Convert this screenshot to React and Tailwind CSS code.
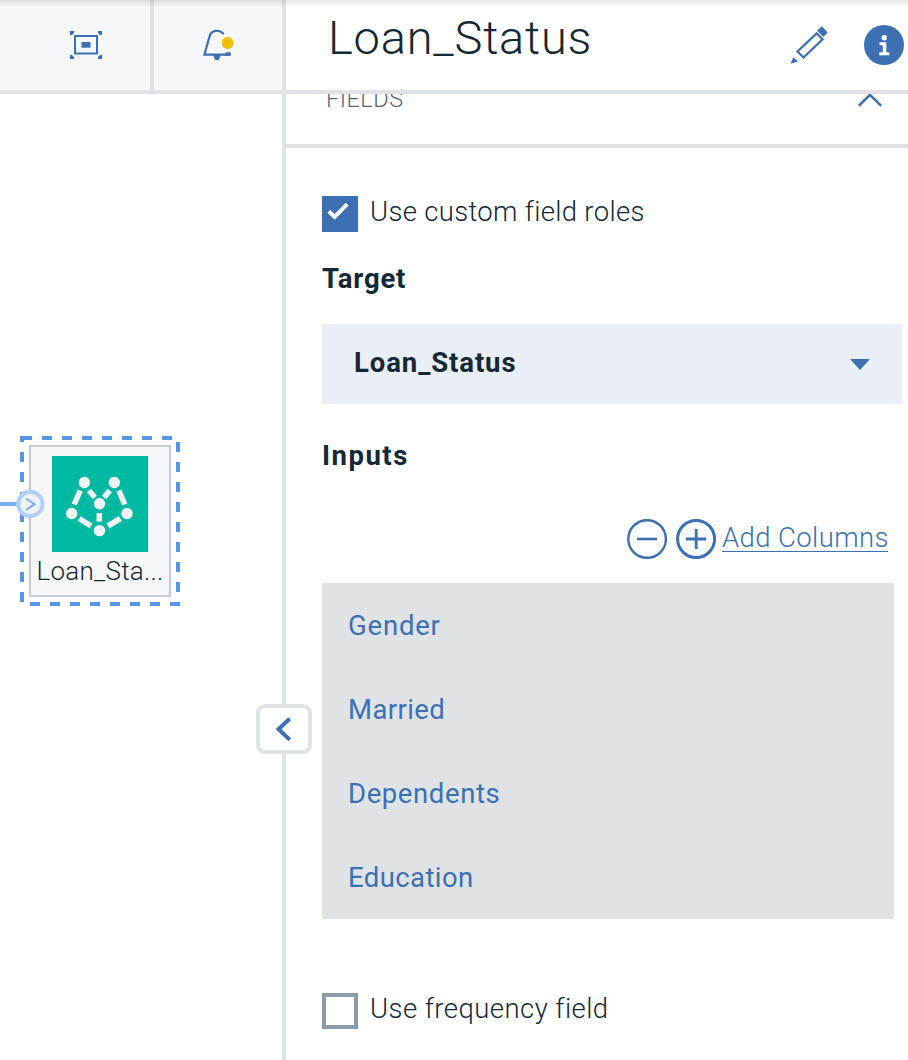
const blue = '#3d70b2';

function Toolbar() {
  return (
    <div className="flex h-[94px] shrink-0 border-b-4 border-[#dfe3e6] bg-[#f5f7fb]">
      <button className="flex w-[154px] items-center border-r-4 border-[#dfe3e6] pl-[70px]" aria-label="Fit">
        <svg width="32" height="28" viewBox="0 0 32 28" fill={blue}>
          <path d="M0 0h4v2L2 4H0zM28 0h4v4h-2l-2-2zM0 24h2l2 2v2H0zM30 24h2v4h-4v-2z" />
          <rect x="5" y="5" width="22" height="17.5" fill="none" stroke={blue} strokeWidth="2" />
          <rect x="11.5" y="11" width="9" height="5.7" />
        </svg>
      </button>
      <button className="flex flex-1 items-center pl-[48px]" aria-label="Notifications">
        <svg width="34" height="34" viewBox="0 0 34 34" fill="none">
          <path d="M21.700 6C17.500 1.200 9.200 1.500 7.500 8.500L2.400 26.600H28.500" stroke={blue} strokeWidth="2.200" />
          <path d="M23 25.600L24.500 24.300H28.600V27.700H23Z" fill={blue} />
          <path d="M11.600 27h6.800a3.400 5.200 0 0 1-6.800 0z" fill={blue} />
          <circle cx="25.600" cy="15" r="6" fill="#efc100" />
        </svg>
      </button>
    </div>
  );
}

function ModelNode() {
  return (
    <div className="absolute top-[436px] left-0 h-[170px] w-[182px]">
      <div className="absolute top-[9px] left-[29px] flex h-[152px] w-[142px] flex-col items-center border-2 border-[#c3cdd3] bg-[#f5f7fb] pt-[9px]">
        <svg className="shrink-0" width="96" height="96" viewBox="52 456 96 96">
          <rect x="52" y="456" width="96" height="96" fill="#00b9a2" />
          <g stroke="#f2f3f3" strokeWidth="5.600">
            <path d="M80.200 490.500L74.200 504.500M118.800 490.500L124.800 504.500M89 490.500L94.800 497.500M109.800 490.500L104 497.500M99.300 513V521.500M79.300 518.500L91 526M120.300 518.500L108 526" />
          </g>
          <g fill="#f2f3f3">
            <circle cx="84.400" cy="482.500" r="5.700" />
            <circle cx="114.300" cy="482.500" r="5.700" />
            <circle cx="99.500" cy="503.700" r="5.700" />
            <circle cx="71.700" cy="513.500" r="5.700" />
            <circle cx="127" cy="513.500" r="5.700" />
            <circle cx="99.500" cy="530.600" r="5.700" />
          </g>
        </svg>
        <div className="mt-[1px] text-[26px] leading-[36px] font-light tracking-[0.250px] whitespace-nowrap">Loan_Sta...</div>
      </div>
      <svg className="absolute top-0 left-0" width="182" height="170" viewBox="0 436 182 170" fill="none">
        <path d="M22 438H178V604H22Z" stroke="#5596e6" strokeWidth="4" strokeDasharray="10 10" />
        <path d="M0 504H18" stroke="#7cabea" strokeWidth="4" />
        <circle cx="30.300" cy="504" r="12.200" fill="#eaf2fc" stroke="#b0cff3" strokeWidth="4" />
        <path d="M26 498.500L34.500 504.200L26 510" stroke="#7cabea" strokeWidth="2" />
      </svg>
    </div>
  );
}

function Checkbox({ checked, children }) {
  return (
    <label className="flex h-10 items-start gap-[12px]">
      {checked ? (
        <span className="mt-[4px] h-9 w-9 bg-[#3d70b2]">
          <svg width="36" height="36" viewBox="0 0 36 36" fill="none">
            <path d="M6.800 15.300L12.600 21L25.200 8.200" stroke="#fff" strokeWidth="4" />
          </svg>
        </span>
      ) : (
        <span className="mt-[4px] h-9 w-9 border-4 border-[#8c9ba5]" />
      )}
      {children}
    </label>
  );
}

function PanelHeader() {
  return (
    <div className="flex h-[94px] shrink-0 items-start border-b-4 border-[#dfe3e6]">
      <h1 className="mt-[10px] ml-[42px] w-[455px] text-[47px] leading-[56px] font-light tracking-[0.8px]">Loan_Status</h1>
      <button className="mt-[25px] ml-[7px]" aria-label="Rename">
        <svg width="40" height="40" viewBox="0 0 40 40" fill="none">
          <path d="M7.500 26.500L26.600 8.300L32.600 14.300L13.600 32.500Z" stroke={blue} strokeWidth="2.300" />
          <path d="M31.900 1.200L37.800 7.500L33.400 12L27 5.500Z" fill={blue} />
          <path d="M3.200 32.300L8.200 36.600L.6 38.700Z" fill={blue} />
        </svg>
      </button>
      <button className="mt-[25px] ml-[34px]" aria-label="Information">
        <svg width="40" height="40" viewBox="0 0 40 40">
          <circle cx="20" cy="20" r="20" fill={blue} />
          <g fill="#fff">
            <circle cx="20.300" cy="12.700" r="2.700" />
            <path d="M15.500 17.300H22.300V27.200H25.300V30.200H15.300V27.200H18.800V20.200H15.500Z" />
          </g>
        </svg>
      </button>
    </div>
  );
}

const inputs = [
  ['Gender', 'tracking-[0.8px]'],
  ['Married', 'tracking-[0.4px]'],
  ['Dependents', 'tracking-[0.6px]'],
  ['Education', 'tracking-[0.4px]'],
];

export default function App() {
  return (
    <div className="relative flex h-[1060px] w-[908px] overflow-hidden bg-white font-['Roboto',sans-serif] text-[27.5px] leading-[40px] text-[#152935]">
      <div className="relative flex w-[282px] shrink-0 flex-col">
        <Toolbar />
        <ModelNode />
      </div>
      <div className="flex w-[626px] shrink-0 flex-col border-l-4 border-[#dfe3e6]">
        <PanelHeader />
        <div className="flex h-[54px] shrink-0 items-start overflow-hidden border-b-4 border-[#dfe3e6] pl-[40px]">
          <div className="-mt-[15px] w-[532px] text-[23.500px] font-light tracking-[0.5px] text-[#5a6872]">FIELDS</div>
          <svg width="26" height="16" viewBox="0 0 26 16" fill="none">
            <path d="M.8 11.800L12 .8L23.200 11.800" stroke={blue} strokeWidth="2.500" />
          </svg>
        </div>
        <div className="flex flex-col pl-[36px]">
          <div className="mt-[44px]">
            <Checkbox checked>
              <span className="font-light tracking-[0.320px]">Use custom field roles</span>
            </Checkbox>
          </div>
          <div className="mt-[27px] font-bold tracking-[0.8px]"><span>Target</span></div>
          <div className="mt-[25px] flex h-20 w-[580px] items-center justify-between bg-[#eaeef6] pr-[32px] pl-[32px]">
            <span className="-mt-[3px] font-bold tracking-[0.9px]">Loan_Status</span>
            <svg width="20" height="12" viewBox="0 0 20 12"><path d="M0 1H20L10 12Z" fill={blue} /></svg>
          </div>
          <div className="mt-[32px] font-bold tracking-[1.500px]"><span>Inputs</span></div>
          <div className="mt-[43px] flex h-10 items-start pl-[305px] text-[#3d70b2]">
            <svg width="40" height="40" viewBox="0 0 40 40" fill="none" stroke={blue}>
              <circle cx="20.100" cy="20" r="18.800" strokeWidth="2.400" />
              <path d="M10 20H30" strokeWidth="2.600" />
            </svg>
            <svg className="ml-[9px]" width="40" height="40" viewBox="0 0 40 40" fill="none" stroke={blue}>
              <circle cx="20.100" cy="20" r="18.500" strokeWidth="3" />
              <path d="M10 20H30M20.200 10V30" strokeWidth="2.800" />
            </svg>
            <a className="-mt-[1px] ml-[6px] h-[34px] w-[166px] border-b border-[#3d70b2] font-light tracking-[0.4px] whitespace-nowrap">Add Columns</a>
          </div>
          <ul className="mt-[24px] h-[336px] w-[572px] bg-[#dfe3e6] text-[#3d70b2]">
            {inputs.map(([name, tracking]) => (
              <li key={name} className="flex h-[84px] items-center pt-[2px] pl-[26px]">
                <span className={tracking}>{name}</span>
              </li>
            ))}
          </ul>
          <div className="mt-[70px]">
            <Checkbox>
              <span className="font-light tracking-[0.450px]">Use frequency field</span>
            </Checkbox>
          </div>
        </div>
      </div>
      <button className="absolute top-[704px] left-[256px] flex h-[50px] w-[56px] items-center justify-center rounded-[9px] border-4 border-[#dfe3e6] bg-white" aria-label="Collapse">
        <svg width="16" height="24" viewBox="0 0 16 24" fill="none">
          <path d="M13.700 1.700L2.500 12.200L13.700 22.700" stroke={blue} strokeWidth="4" />
        </svg>
      </button>
      <div className="pointer-events-none absolute top-0 left-0 h-[7px] w-full bg-linear-to-b from-black/10 to-transparent" />
    </div>
  );
}
